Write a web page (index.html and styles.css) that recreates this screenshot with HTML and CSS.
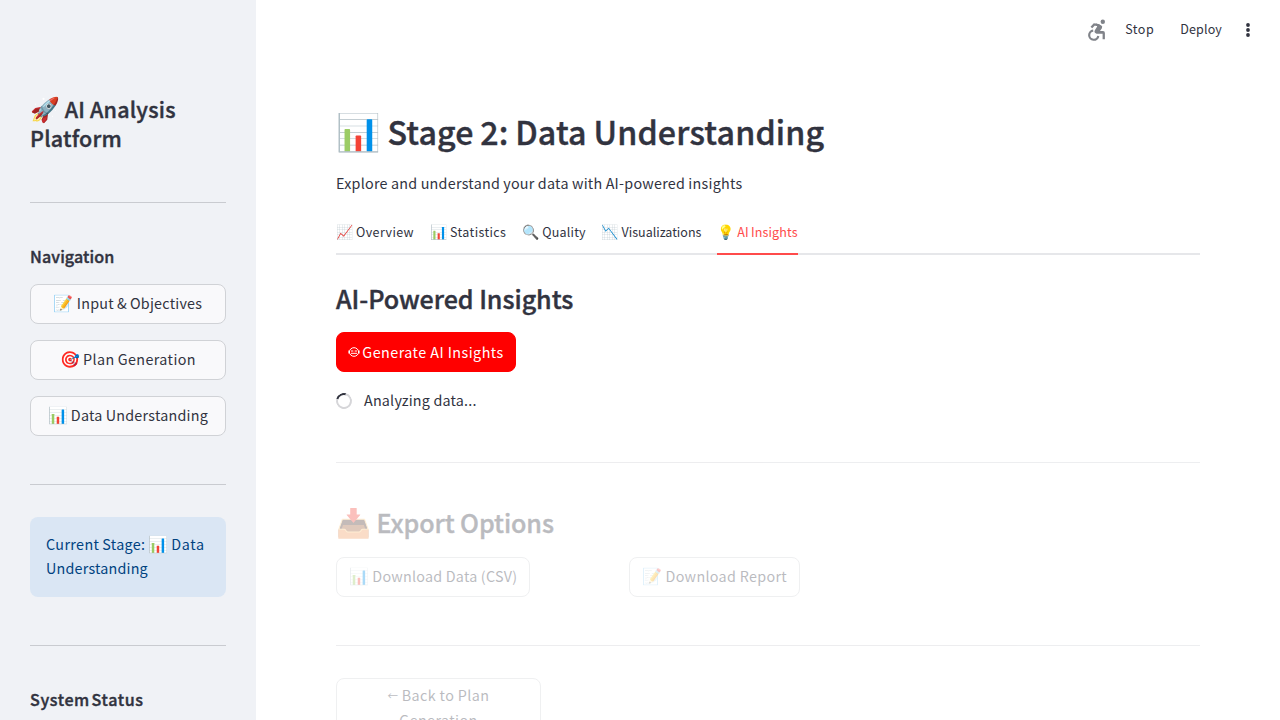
FILE: index.html
```html
<!DOCTYPE html>
<html lang="en">
<head>
<meta charset="utf-8">
<title>AI Analysis Platform</title>
<link rel="stylesheet" href="styles.css">
</head>
<body>
<div class="app">
  <aside class="sidebar">
    <h1 class="brand"><span class="emoji">🚀</span> AI Analysis Platform</h1>
    <hr class="rule rule-brand">
    <h3 class="side-heading">Navigation</h3>
    <nav class="nav">
      <button class="btn"><span><span class="emoji">📝</span> Input &amp; Objectives</span></button>
      <button class="btn looser"><span><span class="emoji">🎯</span> Plan Generation</span></button>
      <button class="btn"><span><span class="emoji">📊</span> Data Understanding</span></button>
    </nav>
    <hr class="rule">
    <div class="info">Current Stage: <span class="emoji">📊</span> <span class="word">Data</span> <span class="tight">Understanding</span></div>
    <hr class="rule">
    <h3 class="side-heading system">System Status</h3>
  </aside>
  <main class="main">
    <header class="toolbar">
      <svg class="running" viewBox="0 0 20 22" width="20" height="22" fill="none" stroke="#808389">
        <circle cx="15.8" cy="2.8" r="2.2" fill="#808389" stroke="none"/>
        <path d="M4.4 8.6 7.2 5.4 12.5 6.4" stroke-width="2.3"/>
        <path d="M8.6 4.3 14 6.2Q16 7.4 14.9 9.3L13 12H16Q17.9 12 17.9 13.9V20.3H15.6V14.8H9.6Q6.4 13.6 8 11L10.2 7.5Z" fill="#808389" stroke="none"/>
        <path d="M6.2 11.6A4.6 4.6 0 1 0 11.3 17" stroke-width="2.2"/>
      </svg>
      <span class="stop">Stop</span>
      <span class="deploy">Deploy</span>
      <svg class="kebab" viewBox="0 0 4 14" width="4" height="14" fill="#31333f"><circle cx="2" cy="2" r="1.9"/><circle cx="2" cy="7" r="1.9"/><circle cx="2" cy="12" r="1.9"/></svg>
    </header>
    <div class="content">
      <h1 class="title"><span class="emoji">📊</span> Stage 2: Data Understanding</h1>
      <p class="lead">Explore and understand your data with AI-powered insights</p>
      <div class="tabs">
        <div class="tab wide"><span class="emoji">📈</span> Overview</div>
        <div class="tab wide"><span class="emoji">📊</span> Statistics</div>
        <div class="tab quality"><span class="emoji">🔍</span> Quality</div>
        <div class="tab"><span class="emoji">📉</span> Visualizations</div>
        <div class="tab active"><span class="emoji">💡</span> AI Insights</div>
      </div>
      <h2 class="section">AI-Powered Insights</h2>
      <button class="btn primary">
        <svg viewBox="0 0 12 12" width="12" height="12" fill="none" stroke="#fff"><ellipse cx="6" cy="6" rx="4.6" ry="4.3"/><path d="M0.9 4.5V7.5M11.1 4.5V7.5M3 5H5.3M6.7 5H9M3 7.3H9"/></svg>
        <span>Generate AI Insights</span>
      </button>
      <div class="status">
        <span class="spinner"></span><span>Analyzing data...</span>
      </div>
      <div class="stale">
        <hr class="rule">
        <h2 class="section export"><span class="emoji">📥</span> Export Options</h2>
        <div class="downloads">
          <div><button class="btn csv"><span><span class="emoji">📊</span> Download Data (CSV)</span></button></div>
          <div><button class="btn loose"><span><span class="emoji">📝</span> Download Report</span></button></div>
        </div>
        <hr class="rule">
        <button class="btn back looser"><span><span class="arrow">←</span> Back to Plan Generation</span></button>
      </div>
    </div>
  </main>
</div>
</body>
</html>
```
FILE: styles.css
```css
* { box-sizing: border-box; }
body { margin: 0; background: #fff; color: #31333f; font-family: "Source Sans Pro", "Noto Sans CJK JP", sans-serif; font-size: 14.33px; line-height: 24px; }
h1, h2, h3, p { margin: 0; font-weight: 500; -webkit-text-stroke: .4px currentColor; }
.emoji { font-family: "Noto Color Emoji", sans-serif; font-size: 1.117em; line-height: 1; letter-spacing: 0; -webkit-text-stroke: 0; }
.app { display: flex; height: 720px; overflow: hidden; }
.sidebar { width: 256px; flex: none; background: #f0f2f6; padding: 95px 30px 0; }
.brand { font-size: 21.5px; line-height: 28.8px; height: 59px; letter-spacing: .2px; word-spacing: -.2px; }
.rule { border: 0; height: 1px; background: #c9cbd0; margin: 48px 0 32px; }
.side-heading { font-size: 16.1px; line-height: 22px; margin-top: 42px; letter-spacing: .1px; }
.system { letter-spacing: .6px; word-spacing: -2.5px; }
.nav { display: flex; flex-direction: column; gap: 16px; margin-top: 17px; }
.btn { display: flex; align-items: center; justify-content: center; height: 40px; padding: 0 12px 2px; border: 1px solid #d0d2d6; border-radius: 8px; background: #f9f9fb; color: inherit; font: inherit; letter-spacing: .24px; white-space: nowrap; }
.nav .btn { word-spacing: -.4px; }
.btn.csv { letter-spacing: .22px; }
.btn.loose { letter-spacing: .32px; }
.btn.looser { letter-spacing: .4px; word-spacing: -.5px; }
.info { background: #dae6f4; color: #004280; border-radius: 8px; padding: 15px 16px; height: 80px; letter-spacing: .36px; word-spacing: -.6px; }
.word { letter-spacing: .6px; }
.tight { letter-spacing: .2px; }
.main { flex: 1; }
.toolbar { height: 60px; display: flex; align-items: center; justify-content: flex-end; padding: 0 30px 0 0; font-size: 12.53px; }
.toolbar span { padding-bottom: 2px; }
.running { margin-right: 18px; }
.stop { margin-right: 26px; letter-spacing: .5px; }
.deploy { margin-right: 24px; letter-spacing: .15px; }
.content { padding: 52px 80px 0; }
.title { font-size: 32.2px; line-height: 39px; padding-bottom: 3px; white-space: nowrap; letter-spacing: .17px; word-spacing: -.8px; }
.lead { font-weight: 400; -webkit-text-stroke: 0; margin-top: 16px; letter-spacing: .25px; word-spacing: -.25px; }
.tabs { display: flex; gap: 16px; margin-top: 17px; height: 43px; font-size: 12.53px; line-height: 39px; border-bottom: 2px solid #e6e7ea; }
.tab { height: 43px; white-space: nowrap; word-spacing: -.5px; }
.wide { letter-spacing: .37px; }
.quality { letter-spacing: .2px; }
.active { color: #ff4b4b; border-bottom: 2px solid #ff4b4b; letter-spacing: .1px; }
.section { font-size: 25.1px; line-height: 34px; margin: 26px 0 17px; letter-spacing: -.05px; }
.primary { background: #f00; border-color: #f00; color: #fff; width: 180px; gap: 2px; letter-spacing: .45px; padding: 0 11px; }
.status { display: flex; align-items: center; gap: 12px; height: 24px; margin-top: 17px; letter-spacing: .2px; }
.status span + span { padding-bottom: 2px; }
.spinner { width: 16px; height: 16px; border: 2px solid #d6d6d9; border-top-color: #31333f; border-radius: 50%; transform: rotate(-30deg); }
.stale { opacity: .33; margin-top: 49px; }
.stale .btn { background: #fff; }
.export { margin: 42px 0 18px; letter-spacing: -.1px; }
.downloads { display: grid; grid-template-columns: 277px 277px; gap: 16px; }
.downloads > div { display: flex; }
.stale .back { width: 205px; height: 66px; padding: 3px 40px; white-space: normal; align-items: flex-start; text-align: center; line-height: 25px; word-spacing: 0; }
.arrow { display: inline-block; font-size: 10.5px; line-height: 1; letter-spacing: 0; vertical-align: 1px; }
```
